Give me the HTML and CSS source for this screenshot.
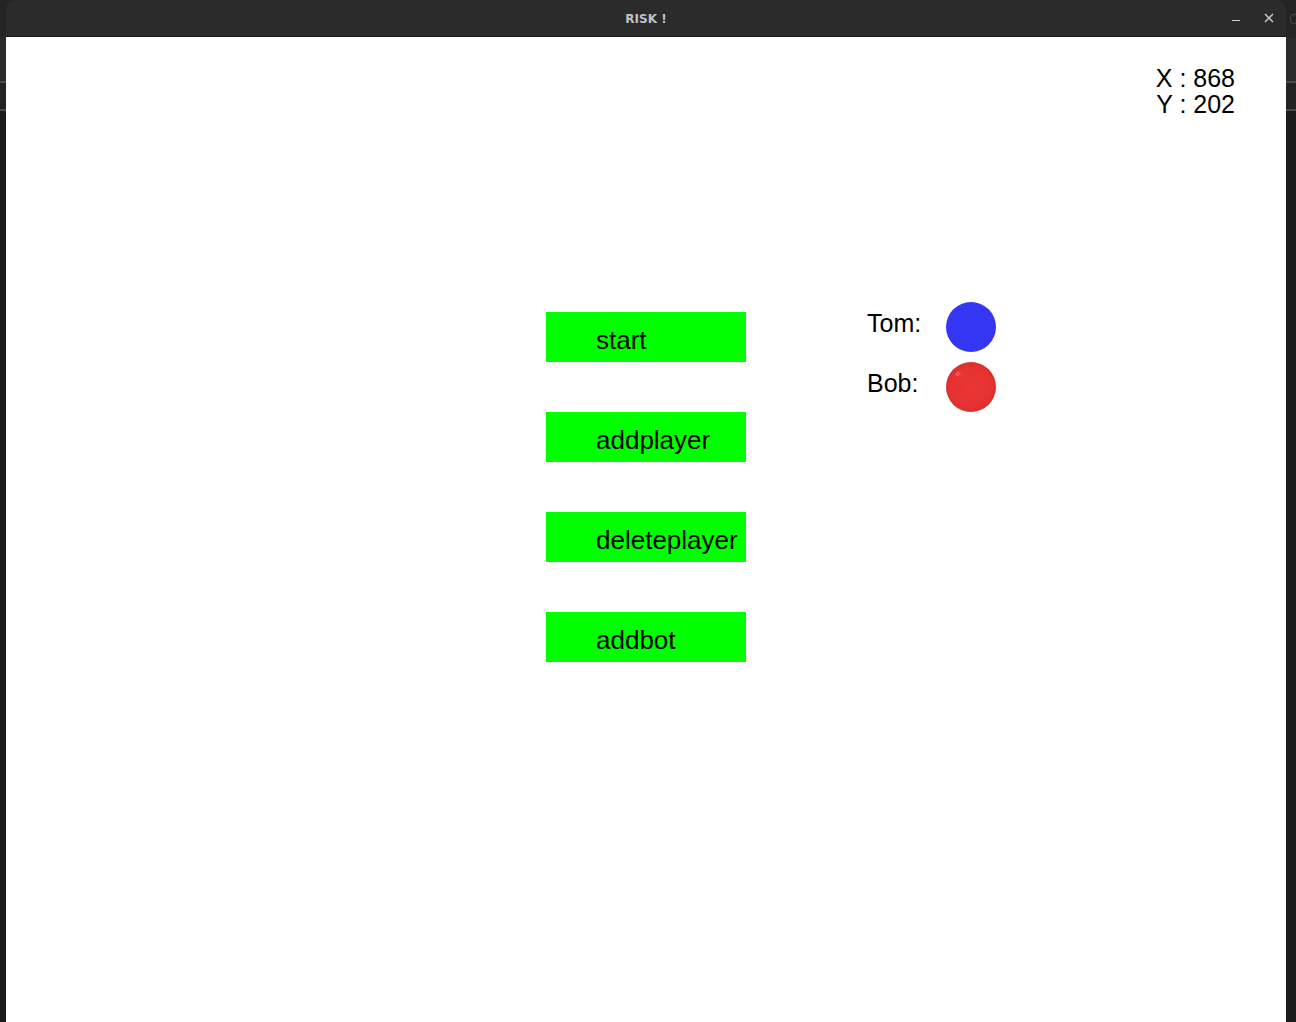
FILE: index.html
```html
<!DOCTYPE html>
<html>
<head>
<meta charset="utf-8">
<title>RISK !</title>
<link rel="stylesheet" href="styles.css">
</head>
<body>
<div class="desktop">
  <div class="window">
    <div class="titlebar">
      <span class="title">RISK !</span>
      <div class="controls">
        <span class="ctl-min"></span>
        <svg class="ctl-close" width="10" height="10" viewBox="0 0 10 10"><path d="M1 1L9 9M9 1L1 9" stroke="#d0d0d0" stroke-width="1.4" fill="none"/></svg>
      </div>
    </div>
    <div class="content">
      <div class="coords">
        <div>X : 868</div>
        <div>Y : 202</div>
      </div>
      <div class="stage">
        <div class="buttons">
          <div class="btn">start</div>
          <div class="btn">addplayer</div>
          <div class="btn">deleteplayer</div>
          <div class="btn">addbot</div>
        </div>
        <div class="players">
          <div class="player"><span class="pname">Tom:</span><span class="token blue"></span></div>
          <div class="player"><span class="pname">Bob:</span><span class="token red"></span></div>
        </div>
      </div>
    </div>
  </div>
  <div class="side-right"><span class="ghost"></span></div>
</div>
</body>
</html>
```
FILE: styles.css
```css
html, body {
  margin: 0;
  padding: 0;
}
body {
  width: 1296px;
  height: 1022px;
  overflow: hidden;
  background: #1d1d1d;
}
.desktop {
  display: flex;
  height: 1022px;
  background:
    linear-gradient(to bottom,
      #242424 0, #242424 38px,
      #2b2b2b 38px, #2b2b2b 81px,
      #4a4a4a 81px, #4a4a4a 83px,
      #232323 83px, #232323 109px,
      #4a4a4a 109px, #4a4a4a 111px,
      #1c1c1c 111px, #1c1c1c 100%);
}
.window {
  margin-left: 6px;
  width: 1280px;
  display: flex;
  flex-direction: column;
}
.titlebar {
  height: 36px;
  background: #2b2b2b;
  border-top-left-radius: 9px;
  border-top-right-radius: 9px;
  border-bottom: 1px solid #1a1a1a;
  display: flex;
  align-items: center;
  justify-content: center;
  position: relative;
}
.title {
  font-family: "DejaVu Sans", sans-serif;
  font-weight: bold;
  font-size: 12px;
  color: #bfc3c8;
  margin-top: 1px;
}
.controls {
  position: absolute;
  right: 12px;
  top: 0;
  height: 36px;
  display: flex;
  align-items: center;
  gap: 24px;
}
.ctl-min {
  width: 8px;
  height: 1px;
  background: #d0d0d0;
  margin-top: 5px;
}
.ctl-close {
  margin-top: -1px;
}
.content {
  flex: 1;
  background: #ffffff;
  font-family: "Liberation Sans", Arial, sans-serif;
  color: #000;
}
.coords {
  box-sizing: border-box;
  padding: 28px 51px 0 0;
  text-align: right;
  font-size: 25px;
  line-height: 26px;
  height: 78px;
}
.stage {
  display: flex;
  align-items: flex-start;
  margin-top: 187px;
  padding-left: 540px;
  gap: 121px;
}
.buttons {
  display: flex;
  flex-direction: column;
  gap: 50px;
  margin-top: 10px;
}
.btn {
  box-sizing: border-box;
  width: 200px;
  height: 50px;
  background: #00ff00;
  padding: 15px 0 0 50px;
  font-size: 26px;
  line-height: 26px;
}
.players {
  display: flex;
  flex-direction: column;
  gap: 10px;
}
.player {
  display: grid;
  grid-template-columns: 79px 50px;
  height: 50px;
}
.pname {
  font-size: 25px;
  line-height: 25px;
  padding-top: 9px;
}
.token {
  width: 50px;
  height: 50px;
  border-radius: 50%;
}
.blue {
  background: #3535f4;
}
.red {
  background: radial-gradient(circle at 50% 50%, #ec3535 0, #e63232 55%, #d22a2a 85%, #b82424 100%);
  position: relative;
}
.red::after {
  content: "";
  position: absolute;
  left: 9px;
  top: 10px;
  width: 6px;
  height: 4px;
  border-radius: 50%;
  background: rgba(255, 120, 120, 0.5);
  transform: rotate(-40deg);
}
.side-right {
  width: 10px;
  overflow: hidden;
}
.ghost {
  display: block;
  margin: 14px 0 0 4px;
  width: 6px;
  height: 8px;
  border: 1px solid #444;
  border-right: none;
  border-radius: 4px 0 0 4px;
}
```
